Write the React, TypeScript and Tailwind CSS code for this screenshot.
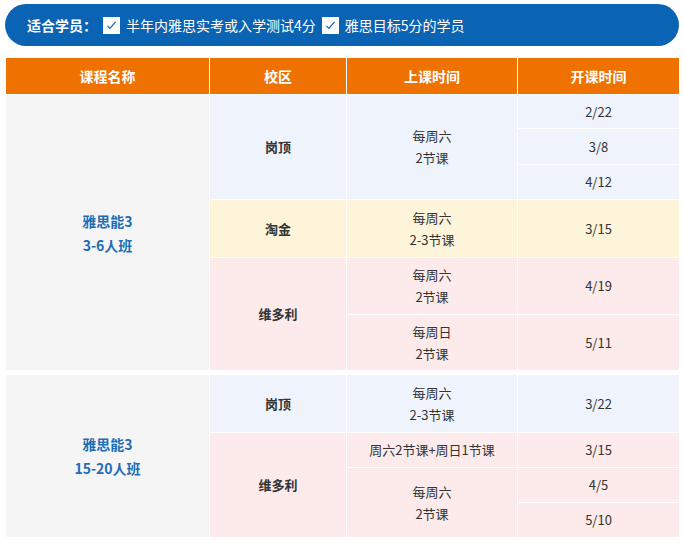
const F = { fontFamily: '"Noto Sans CJK SC", "Liberation Sans", sans-serif' };

function Check() {
  return (
    <span className="inline-flex h-[17px] w-[17px] items-center justify-center bg-white">
      <svg viewBox="0 0 16 16" className="h-[13px] w-[13px]">
        <path d="M3 8.5l3 3 7-8" fill="none" stroke="#1565b4" strokeWidth="1.6" />
      </svg>
    </span>
  );
}

const C = "flex flex-col items-center justify-center text-center text-[13px] leading-[22px] text-[#333]";
const G = "bg-[#f5f5f5]";
const B = "bg-[#eef3fc]";
const Y = "bg-[#fdf4d9]";
const R = "bg-[#fcebea]";
const H = "flex items-center justify-center bg-[#ef7100] text-[14px] font-bold text-white";
const Camp = "font-bold text-[#222]";
const Name = "flex flex-col items-center justify-center text-[14px] font-bold leading-[24px] text-[#1c6cb6]";

export default function App() {
  return (
    <div className="h-[543px] w-[684px] bg-white" style={F}>
      <div className="px-[5px] pt-[4px]">
        <div className="flex h-[42px] items-center gap-[6px] rounded-[21px] bg-[#0b63b4] px-[22px] text-[14px] text-white">
          <span className="font-bold">适合学员：</span>
          <Check />
          <span>半年内雅思实考或入学测试4分</span>
          <Check />
          <span>雅思目标5分的学员</span>
        </div>
      </div>
      <div className="mx-[6px] mt-[12px] grid grid-cols-[203px_136px_170px_161px] gap-x-[1px] bg-white">
        <div className={H + " h-[36px]"}>课程名称</div>
        <div className={H}>校区</div>
        <div className={H}>上课时间</div>
        <div className={H}>开课时间</div>
      </div>
      <div className="mx-[6px] mt-[1px] grid grid-cols-[203px_136px_170px_161px] grid-rows-[33px_35px_34px_57px_56px_55px] gap-[1px] bg-white">
        <div className={Name + " " + G + " col-start-1 row-start-1 row-span-6"}><span>雅思能3</span><span>3-6人班</span></div>
        <div className={C + " " + B + " " + Camp + " col-start-2 row-start-1 row-span-3"}>岗顶</div>
        <div className={C + " " + B + " col-start-3 row-start-1 row-span-3"}><span>每周六</span><span>2节课</span></div>
        <div className={C + " " + B + " col-start-4 row-start-1"}>2/22</div>
        <div className={C + " " + B + " col-start-4 row-start-2"}>3/8</div>
        <div className={C + " " + B + " col-start-4 row-start-3"}>4/12</div>
        <div className={C + " " + Y + " " + Camp + " col-start-2 row-start-4"}>淘金</div>
        <div className={C + " " + Y + " col-start-3 row-start-4"}><span>每周六</span><span>2-3节课</span></div>
        <div className={C + " " + Y + " col-start-4 row-start-4"}>3/15</div>
        <div className={C + " " + R + " " + Camp + " col-start-2 row-start-5 row-span-2"}>维多利</div>
        <div className={C + " " + R + " col-start-3 row-start-5"}><span>每周六</span><span>2节课</span></div>
        <div className={C + " " + R + " col-start-4 row-start-5"}>4/19</div>
        <div className={C + " " + R + " col-start-3 row-start-6"}><span>每周日</span><span>2节课</span></div>
        <div className={C + " " + R + " col-start-4 row-start-6"}>5/11</div>
      </div>
      <div className="mx-[6px] mt-[5px] grid grid-cols-[203px_136px_170px_161px] grid-rows-[57px_34px_34px_34px] gap-[1px] bg-white">
        <div className={Name + " " + G + " col-start-1 row-start-1 row-span-4"}><span>雅思能3</span><span>15-20人班</span></div>
        <div className={C + " " + B + " " + Camp + " col-start-2 row-start-1"}>岗顶</div>
        <div className={C + " " + B + " col-start-3 row-start-1"}><span>每周六</span><span>2-3节课</span></div>
        <div className={C + " " + B + " col-start-4 row-start-1"}>3/22</div>
        <div className={C + " " + R + " " + Camp + " col-start-2 row-start-2 row-span-3"}>维多利</div>
        <div className={C + " " + R + " col-start-3 row-start-2"}>周六2节课+周日1节课</div>
        <div className={C + " " + R + " col-start-4 row-start-2"}>3/15</div>
        <div className={C + " " + R + " col-start-3 row-start-3 row-span-2"}><span>每周六</span><span>2节课</span></div>
        <div className={C + " " + R + " col-start-4 row-start-3"}>4/5</div>
        <div className={C + " " + R + " col-start-4 row-start-4"}>5/10</div>
      </div>
    </div>
  );
}
